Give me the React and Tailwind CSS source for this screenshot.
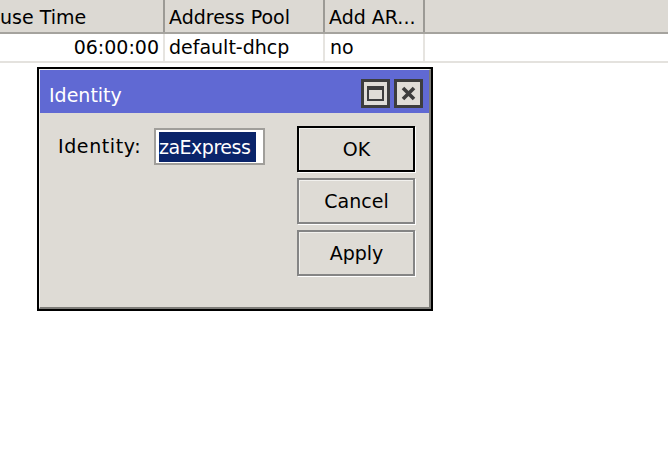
import React from "react";

const font = { fontFamily: '"DejaVu Sans", Verdana, sans-serif' };

const Header = ({ children, className = "" }) => (
  <div className={`h-full flex items-center border-r-2 border-[#9c9a95] overflow-hidden whitespace-nowrap ${className}`}>
    {children}
  </div>
);

const Cell = ({ children, className = "" }) => (
  <div className={`h-full flex items-center border-r-2 border-[#e6e4e0] overflow-hidden whitespace-nowrap ${className}`}>
    {children}
  </div>
);

const WinButton = ({ label, primary }) => (
  <button
    className={`h-[46px] w-[118px] bg-[#dedbd5] text-black text-[19px] flex items-center justify-center shadow-[1px_1px_0_#ffffff] ${
      primary ? "border-2 border-black" : "border-2 border-[#858585]"
    }`}
  >
    <span className="border-t border-l border-white/60 w-full h-full flex items-center justify-center">
      {label}
    </span>
  </button>
);

const App = () => {
  return (
    <div className="relative w-[668px] h-[456px] bg-white overflow-hidden text-black" style={font}>
      {/* table behind the dialog */}
      <div className="grid grid-cols-[165px_160px_100px_1fr] h-[34px] bg-[#dcd9d3] border-b-2 border-[#a5a39e] text-[19px]">
        <Header className="pt-[2px]">
          <span>use Time</span>
        </Header>
        <Header className="pl-[4px] pt-[2px]">Address Pool</Header>
        <Header className="pl-[4px] pt-[2px]">Add AR...</Header>
        <div />
      </div>
      <div className="grid grid-cols-[165px_160px_100px_1fr] h-[29px] border-b-2 border-[#e4e2de] text-[19px]">
        <Cell className="justify-end pr-[4px]">06:00:00</Cell>
        <Cell className="pl-[4px]">default-dhcp</Cell>
        <Cell className="pl-[5px]">no</Cell>
        <div />
      </div>

      {/* Identity window */}
      <div className="absolute left-[37px] top-[67px] w-[396px] h-[244px] border-2 border-black flex flex-col">
        <div className="flex-1 flex flex-col border-t border-l border-[#f2f1ee] border-r-2 border-b-2 border-r-[#7d7c78] border-b-[#7d7c78] bg-[#dedbd5]">
          <div className="h-[43px] bg-[#6069d3] flex items-center pl-[9px] pr-[6px]">
            <span className="text-white text-[19px] flex-1 pt-[8px]">Identity</span>
            <div className="flex gap-[4px] pt-[4px]">
              <div className="w-[29px] h-[29px] border-[3px] border-[#3d3d3d] bg-[#e0ddd7] flex items-center justify-center">
                <div className="w-[17px] h-[15px] border-2 border-t-[4px] border-[#3d3d3d]" />
              </div>
              <div className="w-[29px] h-[29px] border-[3px] border-[#3d3d3d] bg-[#e0ddd7] flex items-center justify-center">
                <svg width="15" height="15" viewBox="0 0 15 15">
                  <path d="M2 2L13 13M13 2L2 13" stroke="#3d3d3d" strokeWidth="3.6" />
                </svg>
              </div>
            </div>
          </div>
          <div className="flex-1 flex pt-[13px] pl-[18px] pr-[14px]">
            <div className="flex items-center gap-[12px] h-[40px] self-start">
              <span className="text-[19px] w-[84px] tracking-[0.6px]">Identity:</span>
              <div className="w-[111px] h-[37px] border-2 border-[#a09e9a] bg-white px-[3px] pt-[2px] overflow-hidden">
                <span className="block h-[30px] leading-[30px] bg-[#0a246a] text-white text-[19px] whitespace-nowrap tracking-[-0.5px] w-[97px]">
                  zaExpress
                </span>
              </div>
            </div>
            <div className="ml-auto flex flex-col gap-[6px]">
              <WinButton label="OK" primary />
              <WinButton label="Cancel" />
              <WinButton label="Apply" />
            </div>
          </div>
        </div>
      </div>
    </div>
  );
};

export default App;
